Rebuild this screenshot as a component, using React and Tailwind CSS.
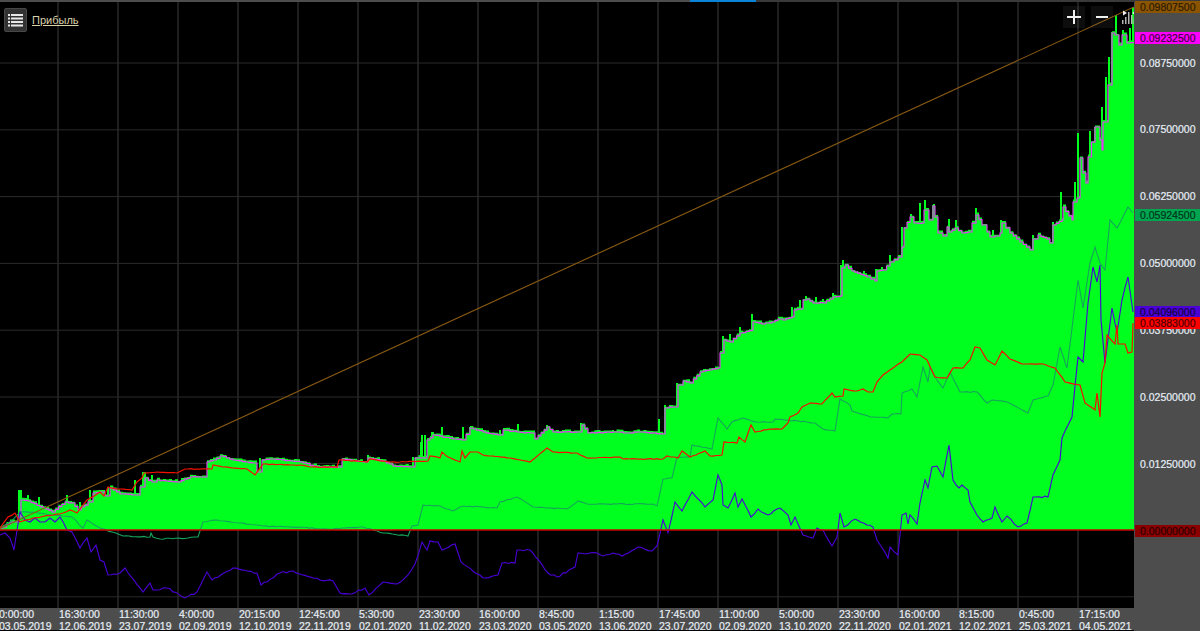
import React from 'react';

const FONT = "font-['Liberation_Sans',Arial,sans-serif]";

const TICKS = [
	['0:00:00', '03.05.2019'], ['16:30:00', '12.06.2019'], ['11:30:00', '23.07.2019'], ['4:00:00', '02.09.2019'],
	['20:15:00', '12.10.2019'], ['12:45:00', '22.11.2019'], ['5:30:00', '02.01.2020'], ['23:30:00', '11.02.2020'],
	['16:00:00', '23.03.2020'], ['8:45:00', '03.05.2020'], ['1:15:00', '13.06.2020'], ['17:45:00', '23.07.2020'],
	['11:00:00', '02.09.2020'], ['5:00:00', '13.10.2020'], ['23:30:00', '22.11.2020'], ['16:00:00', '02.01.2021'],
	['8:15:00', '12.02.2021'], ['0:45:00', '25.03.2021'], ['17:15:00', '04.05.2021'],
];

const PRICES = ['0.08750000', '0.07500000', '0.06250000', '0.05000000', '0.03750000', '0.02500000', '0.01250000'];

// series traced from the picture, page coordinates
const PINK = [0,528,3,527,10,522,15,522,18,517,21,500,28,501,43,508,52,512,65,502,72,503,78,510,88,502,93,493,100,492,105,496,110,488,120,494,135,495,140,487,145,478,152,482,157,480,178,482,190,477,202,477,207,462,213,460,220,456,233,460,252,463,257,472,262,460,273,459,300,462,317,467,338,467,342,459,363,462,368,458,383,461,393,466,412,467,415,458,425,458,427,440,433,435,453,439,462,440,470,428,483,432,498,435,503,430,517,432,530,433,535,439,547,427,553,432,577,432,582,425,588,433,613,432,627,433,640,432,663,434,665,408,673,407,678,385,683,381,690,383,700,372,718,368,720,353,723,353,724,340,730,342,740,333,752,330,753,322,762,324,772,322,778,319,783,320,792,317,794,310,800,309,803,300,807,299,813,303,823,303,833,297,840,296,842,268,845,265,852,271,867,277,875,281,877,271,883,270,890,262,898,257,902,247,904,228,910,217,914,223,922,223,924,210,929,220,933,206,935,217,938,233,943,236,947,227,949,232,955,228,962,233,968,232,976,215,982,225,987,232,990,237,995,236,1000,233,1002,223,1010,233,1020,242,1030,250,1033,239,1038,235,1047,239,1050,243,1053,225,1062,220,1063,207,1072,220,1073,202,1077,198,1080,158,1083,173,1086,183,1088,157,1095,127,1100,140,1102,150,1103,122,1108,85,1112,33,1115,35,1119,45,1122,35,1127,43,1134,43];
const RED = [0,528,8,517,15,513,20,522,33,518,53,515,63,513,70,510,77,513,87,500,100,492,104,496,108,487,117,489,132,490,137,482,142,478,144,473,157,472,177,473,185,469,212,469,213,465,223,467,247,469,255,475,263,464,300,465,310,467,337,467,339,460,367,462,370,459,390,462,400,462,428,461,430,456,440,458,442,452,448,457,460,462,462,451,465,458,470,452,478,452,483,455,510,458,530,462,535,458,547,448,553,452,577,453,587,458,620,457,623,459,663,459,667,456,678,458,682,451,690,457,705,451,710,456,722,455,724,442,737,443,739,437,745,442,751,425,755,432,770,429,782,429,788,423,790,417,798,413,802,407,810,403,822,404,832,393,835,397,843,396,844,389,857,391,863,389,868,392,873,392,877,382,883,375,890,370,902,362,910,354,920,355,927,360,935,377,947,378,953,368,963,368,970,360,975,347,980,348,987,360,995,365,1002,351,1010,359,1022,364,1043,364,1055,368,1065,382,1080,385,1085,403,1095,410,1097,393,1100,417,1102,373,1105,363,1107,335,1115,344,1117,325,1118,344,1125,344,1128,353,1132,352,1133,323];
const DARK = [0,528,10,522,20,512,33,512,50,515,72,517,83,528,87,520,100,528,112,532,123,536,150,537,151,533,153,537,160,539,188,538,198,537,203,522,217,520,240,523,263,526,300,527,327,529,363,527,383,533,408,536,412,526,418,525,423,505,440,506,452,511,463,506,497,508,500,502,517,497,533,507,567,509,578,501,587,504,653,504,657,506,663,479,672,478,677,457,690,457,692,445,712,449,718,418,727,429,732,422,742,418,757,422,773,422,775,419,807,422,815,423,823,429,835,431,840,399,850,405,852,411,870,417,888,418,892,414,901,414,902,393,912,389,917,397,923,367,928,382,930,367,937,380,943,388,950,372,960,392,977,392,987,403,992,400,1007,402,1028,413,1033,400,1048,396,1053,385,1060,347,1067,368,1078,280,1083,308,1090,263,1095,247,1100,263,1105,270,1110,220,1117,228,1128,207,1133,213];
const BLUE = [0,535,5,533,10,538,14,550,17,530,20,512,25,520,30,522,35,518,40,522,45,522,50,518,55,522,60,517,67,530,72,532,80,548,87,538,91,552,96,545,100,560,104,562,108,575,120,573,125,568,143,592,150,583,153,590,167,588,185,598,197,592,207,572,212,580,233,568,257,573,261,585,280,573,293,571,320,580,333,581,340,593,352,594,365,588,369,595,383,582,397,584,408,575,415,564,422,542,427,550,430,541,438,542,442,550,455,544,461,562,483,578,498,575,502,563,515,563,517,550,530,550,548,573,557,577,575,567,578,553,597,553,603,556,613,553,622,556,638,547,652,551,657,546,663,520,668,533,675,502,682,511,692,492,705,507,713,500,718,475,722,485,723,505,728,508,735,493,738,507,742,499,751,517,758,509,768,515,780,508,788,515,791,525,795,517,803,535,813,538,817,528,823,530,832,546,837,537,840,513,844,527,855,519,867,525,873,527,877,540,888,558,890,547,898,555,902,515,906,513,908,524,910,515,917,524,920,503,925,480,928,488,932,467,937,466,943,477,949,445,953,480,959,488,962,485,968,490,970,502,977,515,983,522,992,518,995,507,1002,522,1007,516,1018,527,1027,523,1033,497,1048,497,1053,475,1060,460,1062,438,1072,417,1078,357,1083,362,1088,303,1093,267,1097,282,1100,265,1101,320,1105,363,1112,308,1117,333,1122,300,1128,277,1133,312];
const SPIKES = [19,490,21,490,28,495,39,497,67,495,80,502,90,490,100,490,108,487,135,480,143,472,145,472,152,475,260,458,368,455,413,457,421,442,425,435,432,432,422,435,433,432,442,427,463,427,470,427,500,430,518,424,547,425,581,423,603,431,613,430,659,419,665,405,677,383,723,336,730,334,740,327,752,314,792,307,800,300,806,296,816,297,823,299,833,293,841,265,843,260,864,271,876,269,882,267,890,255,902,227,911,214,920,203,925,200,933,205,949,219,956,220,976,208,993,230,1001,220,1033,235,1053,222,1061,192,1075,182,1078,133,1090,131,1095,127,1102,107,1106,77,1109,57,1112,32,1116,15,1123,30,1130,28,1133,7];

// repeatable pseudo noise in -1..1, so the traced lines get their small jitter
const noise = (x) => {
	const v = Math.sin(x * 12.9898) * 43758.5453;
	return (v - Math.floor(v)) * 2 - 1;
};

// split each traced segment in 3px bits and shake the inner points
const detail = (list, amp) => {
	const out = [[list[0], list[1]]];
	for (let i = 2; i < list.length; i += 2) {
		const [x0, y0, x1, y1] = [list[i - 2], list[i - 1], list[i], list[i + 1]];
		const n = Math.floor((x1 - x0) / 3);
		for (let k = 1; k < n; k++) {
			const x = x0 + ((x1 - x0) * k) / n;
			out.push([x, y0 + ((y1 - y0) * k) / n + noise(x) * amp]);
		}
		out.push([x1, y1]);
	}
	return out;
};

const toPoints = (pts) => pts.map(([x, y]) => x.toFixed(1) + ',' + y.toFixed(1)).join(' ');

// stepped version, the way the chart draws its equity curve
const toSteps = (pts) => {
	const out = [];
	pts.forEach(([x, y], i) => {
		if (i) out.push([x, pts[i - 1][1]]);
		out.push([x, y]);
	});
	return out;
};

const pinkPts = detail(PINK, 0.4);
const fillPts = pinkPts.map(([x, y]) => [x, y - 1 - Math.abs(noise(x + 3)) * 1.6]);

const spikePath = () => {
	let d = '';
	for (let i = 0; i < SPIKES.length; i += 2) d += `M${SPIKES[i]} ${SPIKES[i + 1]}V530`;
	return d;
};

function Chart() {
	const vertical = Array.from({ length: 18 }, (_, i) => 58 + i * 60);
	const horizontal = [63, 129.8, 196.6, 263.4, 330.2, 397, 463.4, 596.8];
	return (
		<svg className="block w-[1134px] h-[606px]" viewBox="0 2 1134 606">
			{vertical.map((x) => <line key={x} x1={x} x2={x} y1="0" y2="608" stroke="#262626" strokeWidth="1.6" />)}
			{horizontal.map((y) => <line key={y} x1="0" x2="1134" y1={y} y2={y} stroke="#2a2a2a" strokeWidth="1" />)}
			<polygon points={`0,530 ${toPoints(toSteps(fillPts))} 1134,530`} fill="#00ff1e" />
			<path d={spikePath()} stroke="#00ff1e" strokeWidth="2" fill="none" />
			<polyline points={toPoints(toSteps(pinkPts))} fill="none" stroke="#e03cf0" strokeWidth="1.2" />
			<polyline points={toPoints(detail(DARK, 0.5))} fill="none" stroke="#14a45a" strokeWidth="1.1" />
			<polyline points={toPoints(detail(BLUE, 0.9))} fill="none" stroke="#4a00d8" strokeWidth="1.1" />
			<polyline points={toPoints(detail(RED, 0.4))} fill="none" stroke="#f41000" strokeWidth="1.2" />
			<line x1="0" y1="528.5" x2="1134" y2="7" stroke="#8a5a12" strokeWidth="1.1" />
			<line x1="0" x2="1134" y1="530" y2="530" stroke="#c80000" strokeWidth="1.5" />
			{/* period bars icon */}
			<g fill="#b4b4b4">
				<rect x="1122" y="20" width="1.5" height="4" />
				<rect x="1125" y="17" width="1.5" height="7" />
				<rect x="1128" y="12" width="1.5" height="12" />
				<rect x="1131" y="15" width="1.5" height="9" />
				<rect x="1133.5" y="19" width="1.5" height="5" />
			</g>
			<path d="M1123 10.5l4 2.5-4 2.5zM1136 10.5l-4 2.5 4 2.5z" fill="#f0f0f0" />
		</svg>
	);
}

function PriceTag({ className, children }) {
	return (
		<div className={`absolute left-[1px] right-0 h-[12px] pl-[5px] leading-[12px] ${className}`}>{children}</div>
	);
}

function PriceAxis() {
	return (
		<div className="relative w-[66px] h-[629px] bg-[#4d4d4d] text-[#e6edf5] text-[10.5px] [-webkit-text-stroke:0.2px_currentColor]">
			<div className="flex flex-col pt-[28px] pl-[6px]">
				{PRICES.map((p) => (
					<div key={p} className="h-[66.9px] flex items-center">{p}</div>
				))}
			</div>
			<PriceTag className="top-[-1px] bg-[#8b5500] text-[#2c1b00]">0.09807500</PriceTag>
			<PriceTag className="top-[30px] bg-[#ff00ff] text-[#3c003c]">0.09232500</PriceTag>
			<PriceTag className="top-[207px] bg-[#00a550] text-[#00331a]">0.05924500</PriceTag>
			<PriceTag className="top-[304px] bg-[#4b00d8] text-[#16003f]">0.04096000</PriceTag>
			<PriceTag className="top-[315px] bg-[#ff0000] text-[#4c0000]">0.03883000</PriceTag>
			<PriceTag className="top-[523px] bg-[#8b0000] text-[#2c0000]">0.00000000</PriceTag>
		</div>
	);
}

export default function App() {
	return (
		<div className={`w-[1200px] h-[631px] bg-black overflow-hidden flex flex-col ${FONT}`}>
			<div className="flex h-[2px] bg-[#3a3a3a]">
				<div className="w-[690px] bg-[#4d4d4d]" />
				<div className="w-[66px] bg-[#0a84d8]" />
			</div>
			<div className="flex flex-1 min-h-0">
				<div className="relative w-[1134px] flex flex-col">
					<Chart />
					<div className="flex h-[22px] -ml-px bg-[#4d4d4d] text-[#e6edf5] text-[10.5px] leading-[12px] [-webkit-text-stroke:0.2px_currentColor]">
						{TICKS.map(([t, d], i) => (
							<div key={i} className="w-[60px] shrink-0 whitespace-nowrap">
								<div>{t}</div>
								<div>{d}</div>
							</div>
						))}
					</div>

					<div className="absolute left-[4px] top-[6px] flex items-center gap-[5px]">
						<button className="w-[23px] h-[24px] flex items-center justify-center bg-[#333333] border border-[#474747] rounded-[2px]">
							<svg width="15" height="13" viewBox="0 0 15 13" fill="#e8e8e8">
								<rect x="0" y="0" width="2" height="2" /><rect x="3" y="0" width="12" height="2" />
								<rect x="0" y="3.5" width="2" height="2" /><rect x="3" y="3.5" width="12" height="2" />
								<rect x="0" y="7" width="2" height="2" /><rect x="3" y="7" width="12" height="2" />
								<rect x="0" y="10.5" width="2" height="2" /><rect x="3" y="10.5" width="12" height="2" />
							</svg>
						</button>
						<a className="text-[#d9d0ac] text-[11px] underline">Прибыль</a>
					</div>

					<div className="absolute left-[1063px] top-[4px] flex gap-[6px]">
						<button className="w-[22px] h-[22px] flex items-center justify-center bg-white/5">
							<svg width="14" height="14" viewBox="0 0 14 14" stroke="#f0f0f0" strokeWidth="2"><path d="M7 0v14M0 7h14" /></svg>
						</button>
						<button className="w-[22px] h-[22px] flex items-center justify-center bg-white/5">
							<svg width="14" height="14" viewBox="0 0 14 14" stroke="#f0f0f0" strokeWidth="2"><path d="M1 7h12" /></svg>
						</button>
					</div>
				</div>
				<PriceAxis />
			</div>
		</div>
	);
}
